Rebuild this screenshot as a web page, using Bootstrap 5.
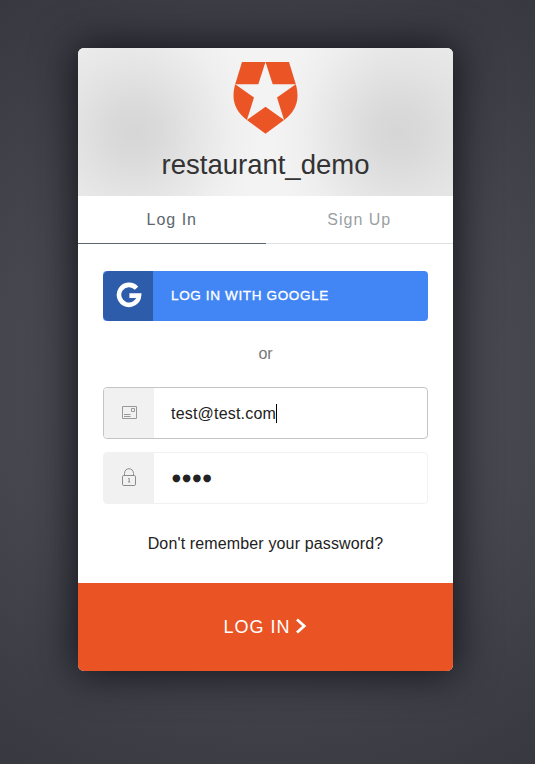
<!DOCTYPE html>
<html lang="en">
<head>
<meta charset="utf-8">
<meta name="viewport" content="width=device-width, initial-scale=1">
<title>restaurant_demo – Log In</title>
<link href="https://cdn.jsdelivr.net/npm/bootstrap@5.3.0/dist/css/bootstrap.min.css" rel="stylesheet">
<style>
body{font-family:"Liberation Sans",Arial,sans-serif;font-size:16px;min-height:764px;padding:48px 4px 0 0;background:radial-gradient(ellipse 100% 65% at 50% 50%,#50505a 0%,#46464f 50%,#3a3a43 85%,#36363f 100%);overflow:hidden}
.login-panel{width:375px;height:623px;border-radius:6px;box-shadow:0 0 40px 4px #15151c;overflow:hidden;background:#fff}
.brand{height:148px;padding-top:14px;background:radial-gradient(ellipse 125px 130px at 57px 84px,rgba(214,214,214,1) 0%,rgba(214,214,214,.85) 20%,rgba(214,214,214,.45) 50%,rgba(214,214,214,.13) 78%,rgba(214,214,214,0) 100%),radial-gradient(ellipse 125px 130px at 320px 84px,rgba(214,214,214,1) 0%,rgba(214,214,214,.85) 20%,rgba(214,214,214,.45) 50%,rgba(214,214,214,.13) 78%,rgba(214,214,214,0) 100%),linear-gradient(90deg,#efefef,#f3f3f3 40%,#f3f3f3 60%,#ececec)}
.brand h1{font-size:27.5px;line-height:34px;margin-top:14px;color:#333}
.tabs-row{height:48px;letter-spacing:1px}
.tabs-row .nav-link{padding:0;line-height:47px;border-bottom:1px solid #dfe0e1;border-radius:0;color:#9a9fa4}
.tabs-row .nav-link.active{color:#5c666f;border-color:#5c666f}
.panel-body{height:339px;padding:27px 25px 0}
.google{height:50px;border-radius:4px;background:#4285f4;font-size:13.5px;letter-spacing:.65px;-webkit-text-stroke:.35px #fff}
.google-mark{width:50px;background:#2d5daa}
.google-mark svg{margin:-2px 0 0 1px}
.google-label{padding-left:18px}
.or-line{color:#777;line-height:24px;margin:21px 0}
.field{height:52px;border:1px solid #f1f1f1;border-radius:4px;overflow:hidden}
.field.focused{border-color:#c4c4c8}
.field + .field{margin-top:13px}
.field-icon{width:50px;background:#f1f1f1}
.field-text{padding:1px 0 0 17px;color:#222;letter-spacing:.2px}
.caret{width:1px;height:19px;background:#000}
.field-text.dots{font:10px "DejaVu Sans",sans-serif;letter-spacing:1.5px;padding:0 0 2px 18px}
.lock{margin-top:-2px}
.forgot{color:#222;line-height:24px;margin-top:28px;letter-spacing:.14px}
.submit{height:88px;border-radius:0;background:#ea5323;font-size:18px;letter-spacing:1px;color:#fff}
.chevron{margin-top:-3px}
</style>
</head>
<body>
<main class="login-panel mx-auto d-flex flex-column">
  <header class="brand d-flex flex-column align-items-center flex-shrink-0">
    <svg class="flex-shrink-0" width="65" height="72" viewBox="0 0 65 72" fill="#eb5424"><path d="M9 0H32.5L25.3 22.2H2.2Z"/><path d="M32.5 0H56L62.8 22.2H39.7Z"/><path d="M2.2 22.2L21 35.5 13.9 58C2 49-2.2 38 2.2 22.2Z"/><path d="M62.8 22.2L44 35.5 51.1 58C63 49 67.2 38 62.8 22.2Z"/><path d="M32.5 44.7L51.1 58 32.5 71.8 13.9 58Z"/></svg>
    <h1 class="fw-normal mb-0">restaurant_demo</h1>
  </header>
  <nav class="tabs-row nav nav-fill flex-shrink-0">
    <a class="nav-link active col-6" href="#">Log In</a>
    <a class="nav-link col-6" href="#">Sign Up</a>
  </nav>
  <section class="panel-body flex-shrink-0">
    <a href="#" class="google d-flex text-white text-decoration-none">
      <span class="google-mark rounded-start d-flex align-items-center justify-content-center">
        <svg width="26" height="26" viewBox="0 0 26 26" fill="none" stroke="#fff" stroke-width="4.6"><path d="M20.5 6.2A10 10 0 1 0 23 13.6H13.4"/></svg>
      </span>
      <span class="google-label d-flex align-items-center">LOG IN WITH GOOGLE</span>
    </a>
    <div class="or-line text-center">or</div>
    <div class="field focused d-flex">
      <span class="field-icon d-flex align-items-center justify-content-center">
        <svg width="16" height="14" viewBox="0 0 16 14" fill="none" stroke="#999"><path d="M1.5.5H15.5V12.5H1.5ZM10.5 2.5H13.5V5.5H10.5ZM3 8.5H9.5M3 10.5H9.5"/></svg>
      </span>
      <span class="field-text d-flex align-items-center">test@test.com<span class="caret"></span></span>
    </div>
    <div class="field d-flex">
      <span class="field-icon d-flex align-items-center justify-content-center">
        <svg class="lock" width="16" height="18" viewBox="0 0 16 18" fill="none" stroke="#8b8b8b"><rect x="1.5" y="7.5" width="13" height="10" rx="1.3"/><path d="M3.5 7V5.5C3.5-.9 12.5-.9 12.5 5.5V7M7.2 10.5H8.2V14M7.2 14H9.2"/></svg>
      </span>
      <span class="field-text dots d-flex align-items-center">●●●●</span>
    </div>
    <div class="forgot text-center">Don't remember your password?</div>
  </section>
  <button class="submit btn border-0 d-flex align-items-center justify-content-center flex-shrink-0" type="button">LOG IN<svg class="chevron ms-1" width="13" height="16" viewBox="0 0 13 16" fill="none" stroke="#fff" stroke-width="2.8"><path d="M2 1.5L9.2 8 2 14.5"/></svg></button>
</main>
<script src="https://cdn.jsdelivr.net/npm/bootstrap@5.3.0/dist/js/bootstrap.bundle.min.js"></script>
</body>
</html>
